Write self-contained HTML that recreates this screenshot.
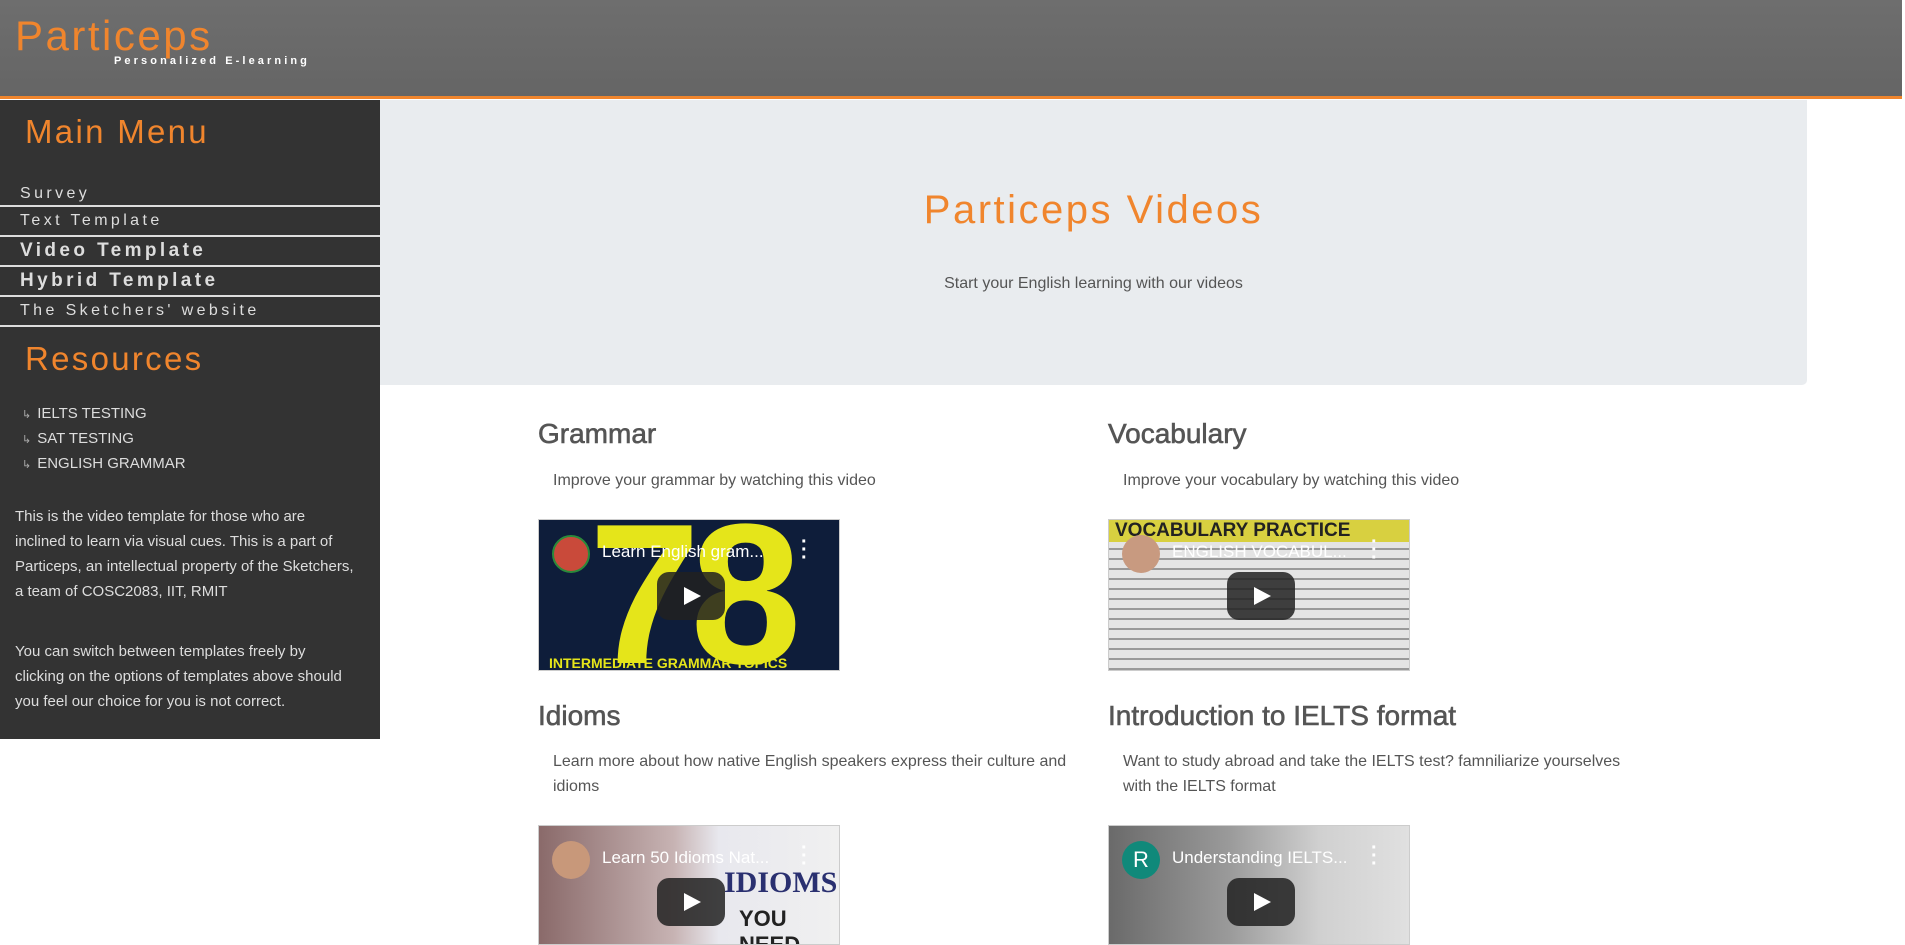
<!DOCTYPE html>
<html><head><meta charset="utf-8"><style>
*{margin:0;padding:0;box-sizing:border-box}
body{width:1905px;height:936px;overflow:hidden;background:#fff;font-family:"Liberation Sans",sans-serif;position:relative}
.hdr{position:absolute;left:0;top:0;width:1902px;height:99px;background:linear-gradient(#6e6e6e,#656565);border-bottom:3px solid #f0852d}
.logo{position:absolute;left:15px;top:12px;font-size:42px;color:#f0852d;letter-spacing:2.5px}
.sub{position:absolute;left:114px;top:55px;font-size:11px;font-weight:bold;color:#fff;letter-spacing:3.1px}
.side{position:absolute;left:0;top:100px;width:380px;height:639px;background:#333}
.h2{position:absolute;left:25px;font-size:33px;color:#f0852d;letter-spacing:2.3px}
.mi{position:absolute;left:0;width:380px;height:30px;border-bottom:2px solid #ddd;color:#ddd;font-size:16px;letter-spacing:3.4px;padding-left:20px;line-height:28px}
.mi.b{font-weight:bold;font-size:19px;letter-spacing:3.4px}
.res{position:absolute;left:22px;font-size:15px;color:#ddd}
.res span{font-size:11px;color:#aaa;margin-right:6px}
.p{position:absolute;left:15px;width:340px;font-size:15px;line-height:25px;color:#ddd}
.jum{position:absolute;left:380px;top:100px;width:1427px;height:285px;background:#e9ecef;border-radius:0 0 5px 0}
.jt{position:absolute;left:0;width:100%;text-align:center;top:88px;font-size:40px;color:#f0852d;letter-spacing:2.5px}
.js{position:absolute;left:0;width:100%;text-align:center;top:175px;font-size:16px;color:#555}
.h3{position:absolute;font-size:28px;color:#555;font-weight:normal;-webkit-text-stroke:0.6px #555}
.d{position:absolute;font-size:16px;line-height:25px;color:#555}
.v{position:absolute;width:302px;height:152px;overflow:hidden;border:1px solid #ccc}
.t{position:absolute;left:63px;top:22px;color:#fff;font-size:17px}
.dots{position:absolute;left:262px;top:18px;color:#fff;font-size:20px;font-weight:bold;line-height:8px}
.av{position:absolute;left:13px;top:15px;width:38px;height:38px;border-radius:50%}
.pl{position:absolute;left:118px;top:52px;width:68px;height:48px;border-radius:12px;background:rgba(33,33,33,.85)}
.pl:after{content:"";position:absolute;left:27px;top:15px;border-left:17px solid #fff;border-top:9px solid transparent;border-bottom:9px solid transparent}
</style></head><body>
<div class="hdr"><div class="logo">Particeps</div><div class="sub">Personalized E-learning</div></div>
<div class="side">
<div class="h2" style="top:13px">Main Menu</div>
<div class="mi" style="top:75px;height:32px;line-height:38px">Survey</div>
<div class="mi" style="top:107px">Text Template</div>
<div class="mi b" style="top:137px">Video Template</div>
<div class="mi b" style="top:167px">Hybrid Template</div>
<div class="mi" style="top:197px">The Sketchers' website</div>
<div class="h2" style="top:240px">Resources</div>
<div class="res" style="top:305px"><span>↳</span>IELTS TESTING</div>
<div class="res" style="top:330px"><span>↳</span>SAT TESTING</div>
<div class="res" style="top:355px"><span>↳</span>ENGLISH GRAMMAR</div>
<div class="p" style="top:404px">This is the video template for those who are inclined to learn via visual cues. This is a part of Particeps, an intellectual property of the Sketchers, a team of COSC2083, IIT, RMIT</div>
<div class="p" style="top:539px">You can switch between templates freely by clicking on the options of templates above should you feel our choice for you is not correct.</div>
</div>
<div class="jum"><div class="jt">Particeps Videos</div><div class="js">Start your English learning with our videos</div></div>

<div class="h3" style="left:538px;top:418px">Grammar</div>
<div class="d" style="left:553px;top:468px">Improve your grammar by watching this video</div>
<div class="v" style="left:538px;top:519px;background:#0e1d3a">
<div style="position:absolute;left:50px;top:-40px;font-size:200px;font-weight:bold;color:#e5e51a;letter-spacing:-10px">78</div>
<div style="position:absolute;left:10px;top:135px;font-size:14px;font-weight:bold;color:#e5e51a">INTERMEDIATE GRAMMAR TOPICS</div>
<div class="av" style="background:#c94a3a;border:2px solid #2a8a3a"></div><div class="t">Learn English gram...</div><div class="dots">·<br>·<br>·</div><div class="pl"></div></div>

<div class="h3" style="left:1108px;top:418px">Vocabulary</div>
<div class="d" style="left:1123px;top:468px">Improve your vocabulary by watching this video</div>
<div class="v" style="left:1108px;top:519px;background:repeating-linear-gradient(#e4e4e4 0 8px,#999 8px 10px)">
<div style="position:absolute;left:0;top:0;width:100%;height:22px;background:#d8d040;color:#222;font-weight:bold;font-size:19px;padding-left:6px">VOCABULARY PRACTICE</div>
<div class="av" style="background:#c89a80"></div><div class="t">ENGLISH VOCABUL...</div><div class="dots">·<br>·<br>·</div><div class="pl"></div></div>

<div class="h3" style="left:538px;top:700px">Idioms</div>
<div class="d" style="left:553px;top:749px">Learn more about how native English speakers express their culture and<br>idioms</div>
<div class="v" style="left:538px;top:825px;height:120px;background:linear-gradient(90deg,#8a6a6a,#c7b3b3 45%,#e8e8ee 60%,#f0f0f0)">
<div style="position:absolute;left:185px;top:40px;font-size:30px;font-weight:bold;color:#2a3070;font-family:'Liberation Serif',serif">IDIOMS</div>
<div style="position:absolute;left:200px;top:80px;font-size:22px;font-weight:bold;color:#222">YOU NEED</div>
<div class="av" style="background:#c8987a"></div><div class="t">Learn 50 Idioms Nat...</div><div class="dots">·<br>·<br>·</div><div class="pl"></div></div>

<div class="h3" style="left:1108px;top:700px">Introduction to IELTS format</div>
<div class="d" style="left:1123px;top:749px">Want to study abroad and take the IELTS test? famniliarize yourselves<br>with the IELTS format</div>
<div class="v" style="left:1108px;top:825px;height:120px;background:linear-gradient(90deg,#6a6a6a,#9a9a9a 40%,#d0d0d0 70%,#e0e0e0)">
<div class="av" style="background:#10897a;color:#fff;font-size:22px;text-align:center;line-height:38px">R</div><div class="t">Understanding IELTS...</div><div class="dots">·<br>·<br>·</div><div class="pl"></div></div>
</body></html>
